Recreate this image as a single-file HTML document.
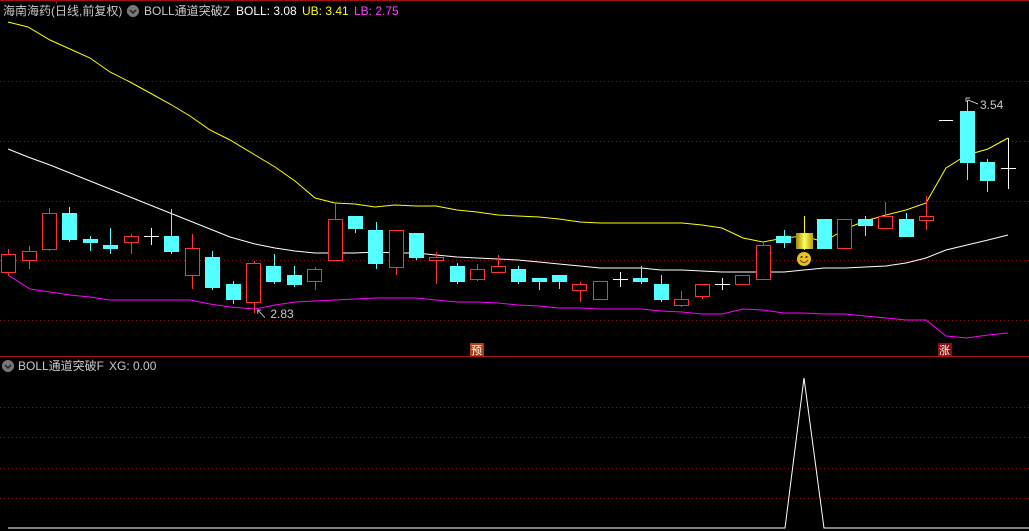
<!DOCTYPE html>
<html><head><meta charset="utf-8"><style>
html,body{margin:0;padding:0;background:#000;width:1029px;height:531px;overflow:hidden}
svg{display:block}
text{font-family:"Liberation Sans","Noto Sans CJK SC",sans-serif;font-size:12px}
</style></head><body>
<svg width="1029" height="531" viewBox="0 0 1029 531" xmlns="http://www.w3.org/2000/svg" shape-rendering="crispEdges">
<rect width="1029" height="531" fill="#000"/>
<line x1="0" y1="0.5" x2="1029" y2="0.5" stroke="#a01010"/>
<line x1="56.5" y1="0" x2="56.5" y2="4" stroke="#a01010"/>
<g stroke="#8a1a1a" stroke-dasharray="1 3">
<line x1="0" y1="81.5" x2="1029" y2="81.5"/>
<line x1="0" y1="141.5" x2="1029" y2="141.5"/>
<line x1="0" y1="201.5" x2="1029" y2="201.5"/>
<line x1="0" y1="260.5" x2="1029" y2="260.5"/>
<line x1="0" y1="320.5" x2="1029" y2="320.5"/>
<line x1="0" y1="407.5" x2="1029" y2="407.5"/>
<line x1="0" y1="437.5" x2="1029" y2="437.5"/>
<line x1="0" y1="468.5" x2="1029" y2="468.5"/>
<line x1="0" y1="498.5" x2="1029" y2="498.5"/>
</g>
<line x1="0" y1="356.5" x2="1029" y2="356.5" stroke="#b01010"/>

<text x="3" y="15" fill="#c8c8c8">海南海药(日线,前复权)</text>
<circle cx="133" cy="11" r="6" fill="#777"/>
<path d="M130 10 L133 13 L136 10" stroke="#222" fill="none" stroke-width="1.5" shape-rendering="auto"/>
<text x="144" y="15" fill="#c8c8c8">BOLL通道突破Z</text>
<text x="236" y="15" fill="#fff">BOLL: 3.08</text>
<text x="302" y="15" fill="#ffff00">UB: 3.41</text>
<text x="354" y="15" fill="#ff40ff">LB: 2.75</text>

<circle cx="8" cy="366" r="6" fill="#777"/>
<path d="M5 365 L8 368 L11 365" stroke="#222" fill="none" stroke-width="1.5" shape-rendering="auto"/>
<text x="18" y="370" fill="#c8c8c8">BOLL通道突破F</text>
<text x="109" y="370" fill="#c8c8c8">XG: 0.00</text>

<g fill="none" stroke-width="1" shape-rendering="auto">
<polyline stroke="#ffff00" points="8,22 28,27 50,40 70,49 90,58 110,72 130,82 150,93 170,104 190,116 210,130 230,140 255,155 275,167 295,181 315,198 335,203 355,204 375,207 395,205 416,206 436,206 457,210 477,212 498,215 518,216 539,217 559,219 580,222 600,223 621,223 641,223 661,223 682,223 702,225 722,228 743,238 763,242 784,238 804,236 824,242 845,229 865,221 886,215 906,210 926,203 946,168 967,155 988,149 1008,138"/>
<polyline stroke="#ffffff" points="8,149 28,157 50,165 70,173 90,181 110,189 130,197 150,205 170,213 190,221 210,229 230,237 255,244 275,248 295,251 315,253 335,253 355,253 376,252 396,253 416,253 436,255 457,257 477,258 498,259 518,260 539,262 559,264 580,266 600,268 621,268 641,268 661,270 682,270 702,271 722,272 743,272 763,272 784,272 804,270 824,268 845,268 865,267 886,266 906,263 926,258 946,250 967,245 988,240 1008,235"/>
<polyline stroke="#ff00ff" points="8,275 30,289 50,292 70,295 90,297 110,300 130,300 150,300 170,300 190,300 210,304 230,307 255,309 275,305 295,302 315,301 335,300 355,299 376,298 396,298 416,298 436,300 457,302 477,302 498,303 518,305 539,306 559,308 580,308 600,309 621,309 641,309 661,311 682,312 702,314 722,314 743,309 763,310 784,313 804,313 824,314 845,314 865,316 886,318 906,320 926,320 946,336 967,338 988,335 1008,333"/>
</g>

<!-- red candles: wick then hollow body -->
<g stroke="#ff3232" fill="#000">
<line x1="8.5" y1="249" x2="8.5" y2="276"/><rect x="1.5" y="254.5" width="14" height="18"/>
<line x1="29.5" y1="246" x2="29.5" y2="269"/><rect x="22.5" y="251.5" width="14" height="9"/>
<line x1="49.5" y1="208" x2="49.5" y2="251"/><rect x="42.5" y="213.5" width="14" height="36"/>
<line x1="131.5" y1="234" x2="131.5" y2="254"/><rect x="124.5" y="236.5" width="14" height="6"/>
<line x1="192.5" y1="234" x2="192.5" y2="289"/><rect x="185.5" y="248.5" width="14" height="27"/>
<line x1="254.5" y1="261" x2="254.5" y2="313"/><rect x="246.5" y="263.5" width="14" height="39"/>
<line x1="315.5" y1="267" x2="315.5" y2="290"/><rect x="307.5" y="269.5" width="14" height="12"/>
<line x1="335.5" y1="202" x2="335.5" y2="261"/><rect x="328.5" y="219.5" width="14" height="41"/>
<line x1="396.5" y1="230" x2="396.5" y2="275"/><rect x="389.5" y="230.5" width="14" height="37"/>
<line x1="436.5" y1="252" x2="436.5" y2="284"/><rect x="429.5" y="257.5" width="14" height="3"/>
<line x1="477.5" y1="264" x2="477.5" y2="281"/><rect x="470.5" y="269.5" width="14" height="10"/>
<line x1="498.5" y1="255" x2="498.5" y2="272"/><rect x="491.5" y="266.5" width="14" height="6"/>
<line x1="580.5" y1="282" x2="580.5" y2="302"/><rect x="572.5" y="284.5" width="14" height="6"/>
<rect x="593.5" y="281.5" width="14" height="18"/>
<line x1="681.5" y1="291" x2="681.5" y2="307"/><rect x="674.5" y="299.5" width="14" height="6"/>
<line x1="702.5" y1="284" x2="702.5" y2="299"/><rect x="695.5" y="284.5" width="14" height="12"/>
<rect x="735.5" y="275.5" width="14" height="9"/>
<line x1="763.5" y1="241" x2="763.5" y2="280"/><rect x="756.5" y="245.5" width="14" height="34"/>
<rect x="837.5" y="219.5" width="14" height="29"/>
<line x1="885.5" y1="202" x2="885.5" y2="229"/><rect x="878.5" y="216.5" width="14" height="12"/>
<line x1="926.5" y1="196" x2="926.5" y2="230"/><rect x="919.5" y="216.5" width="14" height="4"/>
</g>

<!-- cyan candles -->
<g stroke="#54ffff" fill="#54ffff">
<line x1="69.5" y1="207" x2="69.5" y2="242"/><rect x="62.5" y="213.5" width="14" height="26"/>
<line x1="90.5" y1="236" x2="90.5" y2="251"/><rect x="83.5" y="239.5" width="14" height="3"/>
<line x1="110.5" y1="228" x2="110.5" y2="254"/><rect x="103.5" y="245.5" width="14" height="3"/>
<line x1="171.5" y1="209" x2="171.5" y2="254"/><rect x="164.5" y="236.5" width="14" height="15"/>
<line x1="212.5" y1="251" x2="212.5" y2="290"/><rect x="205.5" y="257.5" width="14" height="30"/>
<line x1="233.5" y1="281" x2="233.5" y2="304"/><rect x="226.5" y="284.5" width="14" height="15"/>
<line x1="274.5" y1="254" x2="274.5" y2="284"/><rect x="266.5" y="266.5" width="14" height="15"/>
<line x1="294.5" y1="266" x2="294.5" y2="287"/><rect x="287.5" y="275.5" width="14" height="9"/>
<line x1="355.5" y1="216" x2="355.5" y2="233"/><rect x="348.5" y="216.5" width="14" height="12"/>
<line x1="376.5" y1="222" x2="376.5" y2="269"/><rect x="368.5" y="230.5" width="14" height="33"/>
<line x1="416.5" y1="233" x2="416.5" y2="260"/><rect x="409.5" y="233.5" width="14" height="24"/>
<line x1="457.5" y1="263" x2="457.5" y2="284"/><rect x="450.5" y="266.5" width="14" height="15"/>
<line x1="518.5" y1="266" x2="518.5" y2="284"/><rect x="511.5" y="269.5" width="14" height="12"/>
<line x1="539.5" y1="278" x2="539.5" y2="290"/><rect x="532.5" y="278.5" width="14" height="3"/>
<line x1="559.5" y1="275" x2="559.5" y2="289"/><rect x="552.5" y="275.5" width="14" height="6"/>
<line x1="641.5" y1="266" x2="641.5" y2="284"/><rect x="633.5" y="278.5" width="14" height="3"/>
<line x1="661.5" y1="275" x2="661.5" y2="302"/><rect x="654.5" y="284.5" width="14" height="15"/>
<line x1="784.5" y1="230" x2="784.5" y2="248"/><rect x="776.5" y="236.5" width="14" height="6"/>
<rect x="817.5" y="219.5" width="14" height="29"/>
<line x1="865.5" y1="216" x2="865.5" y2="236"/><rect x="858.5" y="219.5" width="14" height="6"/>
<line x1="906.5" y1="213" x2="906.5" y2="236"/><rect x="899.5" y="219.5" width="14" height="17"/>
<line x1="967.5" y1="100" x2="967.5" y2="180"/><rect x="960.5" y="111.5" width="14" height="51"/>
<line x1="987.5" y1="159" x2="987.5" y2="192"/><rect x="980.5" y="162.5" width="14" height="18"/>
</g>

<!-- white doji -->
<g stroke="#fff">
<line x1="144" y1="236.5" x2="159" y2="236.5"/><line x1="151.5" y1="228" x2="151.5" y2="245"/>
<line x1="613" y1="279.5" x2="628" y2="279.5"/><line x1="620.5" y1="272" x2="620.5" y2="287"/>
<line x1="715" y1="284.5" x2="730" y2="284.5"/><line x1="722.5" y1="278" x2="722.5" y2="290"/>
<line x1="939" y1="120.5" x2="953" y2="120.5"/>
<line x1="1001" y1="168.5" x2="1016" y2="168.5"/><line x1="1008.5" y1="138" x2="1008.5" y2="189"/>
</g>

<!-- gold candle -->
<defs><linearGradient id="g" x1="0" x2="1"><stop offset="0" stop-color="#9a8a00"/><stop offset="0.5" stop-color="#ffff60"/><stop offset="1" stop-color="#b0a000"/></linearGradient></defs>
<line x1="804.5" y1="216" x2="804.5" y2="250" stroke="#ffff00"/>
<rect x="796" y="233" width="17" height="16" fill="url(#g)"/>
<circle cx="804" cy="259" r="7" fill="#e8c020" shape-rendering="auto"/>
<circle cx="801.5" cy="257" r="1" fill="#553300"/><circle cx="806.5" cy="257" r="1" fill="#553300"/>
<path d="M800 260 Q804 265 808 260" stroke="#553300" fill="none" shape-rendering="auto"/>

<text x="255" y="318" fill="#c8c8c8">↖ 2.83</text>
<path d="M966 98 L966 102 M966 98 L970 98 M968 100 L978 104" stroke="#c8c8c8" fill="none"/>
<text x="980" y="109" fill="#c8c8c8">3.54</text>

<rect x="470" y="343" width="14" height="13" fill="#b04010"/>
<text x="471" y="354" fill="#fff" style="font-size:11px">预</text>
<rect x="938" y="343" width="14" height="13" fill="#8a1010"/>
<text x="939" y="354" fill="#fff" style="font-size:11px">涨</text>

<polyline fill="none" stroke="#fff" shape-rendering="auto" points="8,528 785,528 804,378 824,528 1029,528"/>
</svg>
</body></html>
